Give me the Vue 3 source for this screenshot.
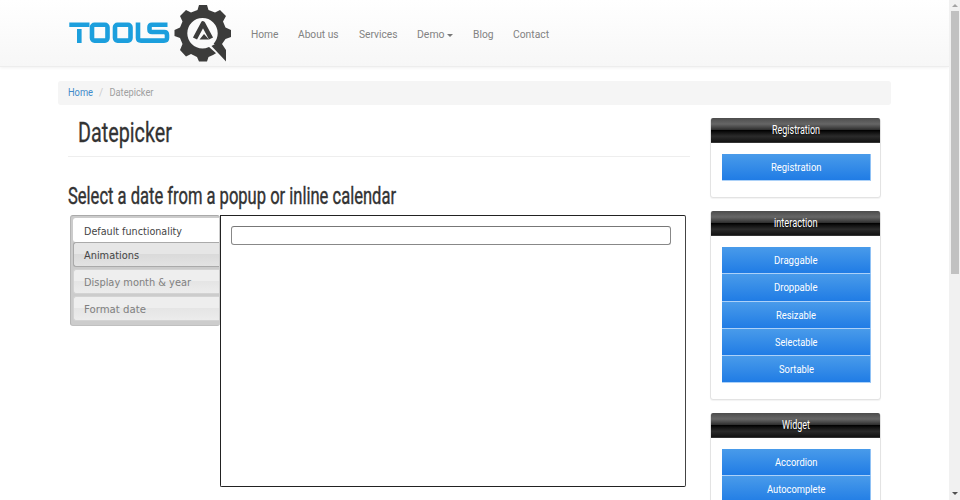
<script setup>
const nav = [
  { name: 'Home', width: 27.5 },
  { name: 'About us', width: 40.5 },
  { name: 'Services', width: 38.5 },
  { name: 'Demo', width: 27.5, menu: true },
  { name: 'Blog', width: 20.5 },
  { name: 'Contact', width: 36 },
]
const tabs = [
  { name: 'Default functionality', width: 98, kind: 'active' },
  { name: 'Animations', width: 55, kind: 'hover' },
  { name: 'Display month & year', width: 107, kind: 'normal' },
  { name: 'Format date', width: 62, kind: 'normal last' },
]
const groups = [
  { title: 'Registration', width: 48, items: [['Registration', 50.5]] },
  { title: 'interaction', width: 43.5, items: [['Draggable', 43.5], ['Droppable', 43.5], ['Resizable', 40], ['Selectable', 42.5], ['Sortable', 35]] },
  { title: 'Widget', width: 28, items: [['Accordion', 42.5], ['Autocomplete', 58.5]] },
]
</script>

<template>
  <div class="window">
    <main class="page">
      <header class="header">
        <svg class="logo" width="166" height="66" viewBox="0 0 166 66">
          <g fill="none" stroke="#1c9fdd" stroke-width="4.6">
            <path d="M0.300 24.800H20.500M10.300 29V43" />
            <rect x="23" y="24.800" width="15.500" height="15.800" rx="2.500" />
            <rect x="46" y="24.800" width="15.500" height="15.800" rx="2.500" />
            <path d="M69 22.500V38Q69 40.600 72 40.600H79M98.500 24.800H83Q80.500 24.800 80.500 27.300V29.500Q80.500 32 83 32H95Q98 32 98 35V38Q98 40.600 95 40.600H78" />
          </g>
          <path fill="#3c3c3b" fill-rule="evenodd" d="M128.500 10L130 5H138L139.500 10L146 12.500L151 10L157 16L154 21.500L156.500 27.500L162 30V37L156.500 39L153 44L157 50V61L149 52L144 55L139.500 57L138 61.500H130L128 57L122 54L117 56.500L111 50L113.500 44L111 38L105.500 36V30L111 27.500L113.500 21.500L111 16L117 10L122 12.500ZM133.500 18A15.200 15.200 0 1 0 133.500 48.400A15.200 15.200 0 1 0 133.500 18Z" />
          <path d="M126 38.500L134 23.500L142 38.500" fill="none" stroke="#3c3c3b" stroke-width="4.600" stroke-linejoin="round" />
          <path d="M130.500 39.500L135 34L140 39.500Z" fill="#3c3c3b" />
          <path d="M139.500 46.500L143.500 42.500L160 57V65L157 62Z" fill="#fafafa" />
          <path d="M142.500 46L147 43.500L157 53V61.500Z" fill="#3c3c3b" />
        </svg>
        <nav class="nav">
          <a v-for="n in nav" :key="n.name">
            <svg :width="n.width" height="16"><text y="12" :textLength="n.width" lengthAdjust="spacingAndGlyphs">{{ n.name }}</text></svg>
            <i v-if="n.menu" class="caret"></i>
          </a>
        </nav>
      </header>

      <div class="breadcrumb">
        <svg width="90" height="16">
          <text x="0" y="12" textLength="25" lengthAdjust="spacingAndGlyphs" class="link">Home</text>
          <text x="31" y="12" class="slash">/</text>
          <text x="41.500" y="12" textLength="44" lengthAdjust="spacingAndGlyphs">Datepicker</text>
        </svg>
      </div>

      <div class="columns">
        <section class="content">
          <h1><svg width="110" height="38"><text x="10" y="27.500" textLength="94" lengthAdjust="spacingAndGlyphs">Datepicker</text></svg></h1>
          <h2><svg width="340" height="34"><text x="0" y="22" textLength="328" lengthAdjust="spacingAndGlyphs">Select a date from a popup or inline calendar</text></svg></h2>
          <div class="demo">
            <div class="tabs">
              <div v-for="t in tabs" :key="t.name" class="tab" :class="t.kind">
                <svg :width="t.width" height="16"><text y="12" :textLength="t.width" lengthAdjust="spacingAndGlyphs">{{ t.name }}</text></svg>
              </div>
            </div>
            <div class="panel"><input type="text" aria-label="Date" /></div>
          </div>
        </section>

        <aside class="sidebar">
          <section v-for="g in groups" :key="g.title" class="card">
            <h3><svg :width="g.width" height="20"><text y="15.500" :textLength="g.width" lengthAdjust="spacingAndGlyphs">{{ g.title }}</text></svg></h3>
            <div class="links">
              <a v-for="i in g.items" :key="i[0]">
                <svg :width="i[1]" height="16"><text y="12" :textLength="i[1]" lengthAdjust="spacingAndGlyphs">{{ i[0] }}</text></svg>
              </a>
            </div>
          </section>
        </aside>
      </div>
    </main>
    <div class="scrollbar">
      <i class="arrow up"></i>
      <div class="thumb"></div>
      <i class="arrow down"></i>
    </div>
  </div>
</template>

<style>
body { margin: 0; background: #fff; overflow: hidden; }
</style>
<style scoped>
.window { display: flex; width: 960px; height: 500px; overflow: hidden; font-family: Roboto, sans-serif; font-size: 10px; }
.window * { box-sizing: border-box; }
svg { display: block; flex: none; overflow: visible; }
.page { width: 949px; height: 500px; overflow: hidden; }
.header { display: flex; height: 67px; padding-left: 69px; background: linear-gradient(#fff, #f7f7f7); border-bottom: 1px solid #ededed; box-shadow: 0 1px 3px rgba(0,0,0,.06); }
.nav { display: flex; gap: 19.700px; padding: 26px 0 0 16.300px; }
.nav a { display: flex; height: 16px; }
.nav text { fill: #828282; }
.caret { width: 6px; height: 3px; margin: 8px 0 0 3px; border: 3px solid transparent; border-top-color: #777; border-bottom: 0; }
.breadcrumb { width: 833px; height: 24px; margin: 13.500px 0 0 58px; padding: 3px 10px; background: #f5f5f5; border-radius: 3px; }
.breadcrumb text { fill: #a0a0a0; }
.breadcrumb .link { fill: #428bca; }
.breadcrumb .slash { fill: #ccc; }
.columns { display: flex; gap: 20px; padding-left: 68px; }
.content { width: 622px; }
h1, h2, h3 { margin: 0; font-weight: 400; }
h1 { height: 52px; padding-top: 9px; border-bottom: 1px solid #eee; }
h1 text { font-size: 28px; fill: #333; stroke: #333; stroke-width: .3px; }
h2 { height: 33px; margin-top: 25px; }
h2 text { font-size: 23px; fill: #333; stroke: #333; stroke-width: .4px; }
.demo { display: flex; align-items: flex-start; padding-left: 2px; }
.tabs { width: 150px; height: 111px; padding: 2px 1px 0 2px; background: #ccc; border: 1px solid #aaa; border-color: #aaa #aaa #c0c0c0 #b5b5b5; border-right: 0; border-radius: 3px; }
.tab { height: 25px; margin-bottom: 2px; padding: 4px 0 0 10px; border: 1px solid #d3d3d3; border-right: 0; border-radius: 3px 0 0 3px; background: linear-gradient(#eee 0 49%, #e5e5e5 50%, #ececec); }
.tab text { font: 10px "DejaVu Sans", sans-serif; fill: #808080; }
.tab.active { height: 24px; margin: 0; background: #fff; border-color: #fff; }
.tab.active text, .tab.hover text { fill: #444; }
.tab.hover { border-color: #aaa; background: linear-gradient(#e6e6e6 0 49%, #dadada 50%, #e3e3e3); }
.panel { width: 466px; height: 272px; padding: 10px; border: 1px solid #222; border-right: 1px solid #444; border-radius: 0 2px 2px 2px; background: #fff; }
.panel input { display: block; width: 440px; height: 19px; border: 1px solid #888; border-top-color: #777; border-radius: 3px; background: #fff; outline: 0; }
.sidebar { width: 171px; padding-top: 13.500px; }
.card { margin-bottom: 13px; padding-bottom: 16px; background: #fff; border: 1px solid #e3e3e3; border-radius: 3px; box-shadow: 0 1px 1px rgba(0,0,0,.05); }
h3 { display: flex; justify-content: center; height: 25px; margin: -1px 0 0; background: linear-gradient(#4c4c4c, #595959 12%, #666 25%, #474747 39%, #2c2c2c 50%, #000 51%, #111 60%, #2b2b2b 76%, #1c1c1c 91%, #131313); border-bottom: 1px solid #333; border-radius: 2px 2px 0 0; }
h3 text { font-size: 12.500px; fill: #fff; }
.links { padding: 11px 9px 0 11px; }
.links a { display: flex; justify-content: center; height: 27.200px; padding-top: 5px; background: linear-gradient(#499bea, #207ce5); border-right: 1px solid #8fc1f5; border-bottom: 1px solid #acd1f8; }
.links text { fill: #fff; }
.scrollbar { display: flex; flex-direction: column; align-items: center; width: 11px; height: 500px; background: #f1f1f1; }
.arrow { flex: none; border: 3px solid transparent; }
.up { margin-top: 4px; border-top: 0; border-bottom-color: #a3a3a3; }
.thumb { width: 8px; height: 263px; margin-top: 4px; background: #c1c1c1; }
.down { margin-top: auto; margin-bottom: 5px; border-bottom: 0; border-top-color: #505050; }
</style>
